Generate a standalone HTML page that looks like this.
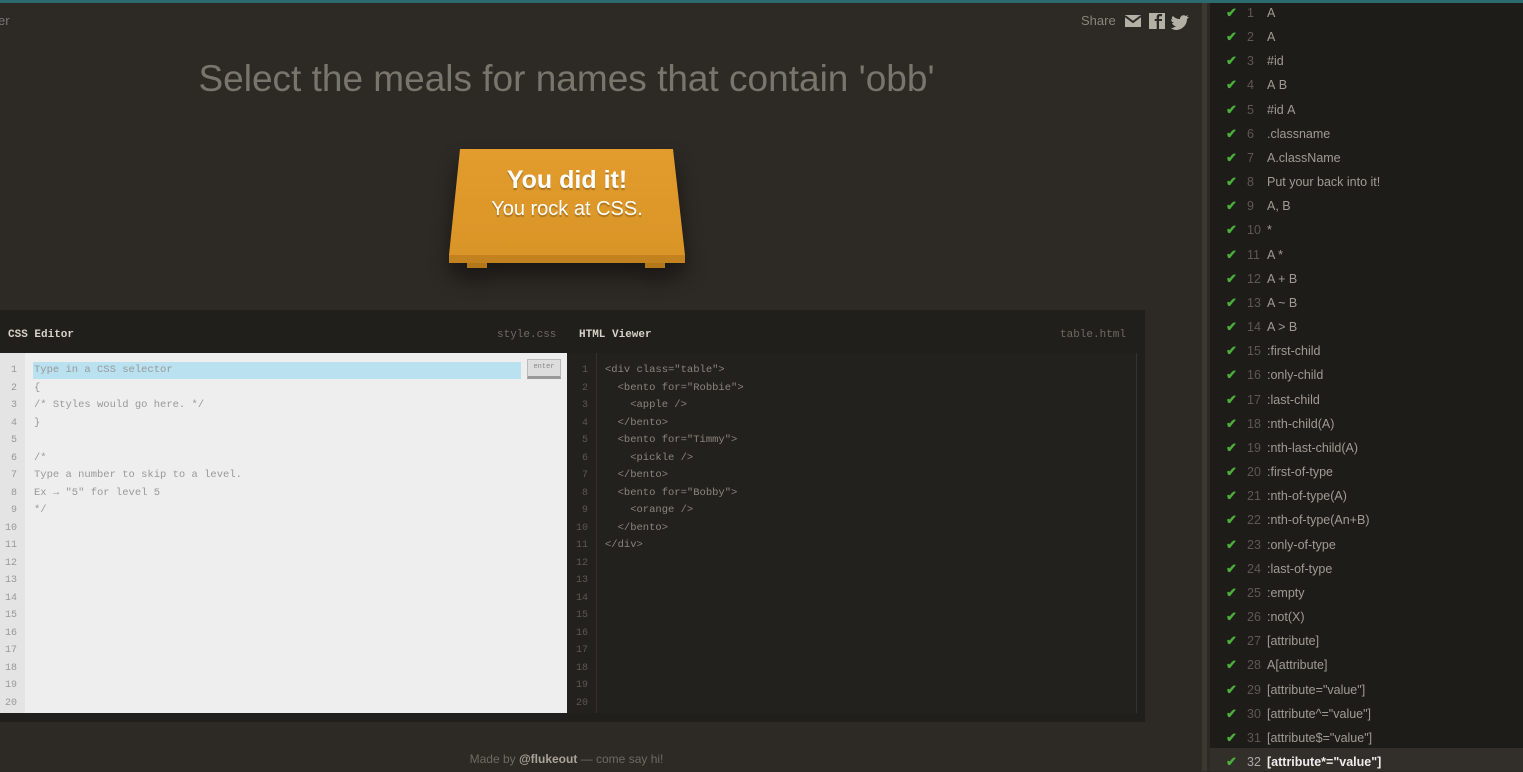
<!DOCTYPE html>
<html><head><style>
*{margin:0;padding:0;box-sizing:border-box}
body{width:1523px;height:771px;overflow:hidden;background:#2d2924;font-family:"Liberation Sans",sans-serif;position:relative}
.top{position:absolute;left:0;top:0;width:1523px;height:3px;background:#2b6a6e}
.mono{font-family:"Liberation Mono",monospace}
.h1{position:absolute;left:0;width:1133px;top:58px;text-align:center;font-size:37px;color:#7a756c}
.wrap{position:absolute;left:449px;top:149px;width:236px;height:120px;filter:drop-shadow(0 12px 10px rgba(0,0,0,.45))}
.tabbot{position:absolute;left:0;top:0;width:236px;height:114px;background:linear-gradient(#e29c2d,#d99427);clip-path:polygon(11px 0,224px 0,236px 106px,236px 114px,0 114px,0 106px)}
.edge{position:absolute;left:0;top:106px;width:236px;height:8px;background:#c2821f}
.leg{position:absolute;top:114px;width:20px;height:5px;background:#b27719}
.ed{position:absolute;left:0;top:310px;width:1145px;height:412px;background:#211f1b}
.hd{position:absolute;top:329px;font-size:11px;font-weight:bold;color:#d7d2c8}
.fn{position:absolute;top:329px;font-size:11px;color:#6e6a62}
.css{position:absolute;left:0;top:353px;width:567px;height:360px;background:#eeeeee}
.gut{position:absolute;left:0;top:353px;width:25px;height:360px;background:#e4e4e4}
.hv{position:absolute;left:567px;top:353px;width:570px;height:360px;background:#23211d;border-right:1px solid #333}
.ln{position:absolute;font-size:10px;line-height:17.5px;text-align:right}
.code{position:absolute;font-size:10.5px;line-height:17.5px;white-space:pre}
.side{position:absolute;left:1210px;top:3px;width:313px;height:768px;background:#1e1c19}
.div{position:absolute;left:1202px;top:3px;width:5px;height:768px;background:#3b3731}
.row{position:absolute;left:0;width:313px;height:24px;font-size:12.5px;color:#a09b92;line-height:20px}
.row .c{position:absolute;left:16px;color:#4caf3a;font-weight:bold;font-size:13px}
.row .n{position:absolute;left:37px;color:#5c5852}
.row .t{position:absolute;left:57px}
</style></head><body>
<div class="top"></div>
<div style="position:absolute;left:-2px;top:13px;font-size:13px;color:#777">er</div>
<div style="position:absolute;left:1081px;top:13px;font-size:13px;color:#8a857c">Share</div>
<svg style="position:absolute;left:1125px;top:13px" width="66" height="17"><rect x="0" y="2" width="16" height="12" fill="#b5b0a6"/><path d="M0 3 L8 9 L16 3" stroke="#2d2924" stroke-width="2" fill="none"/><rect x="24" y="0" width="16" height="16" fill="#b5b0a6"/><path d="M34 16V8h3V6h-3V4.5c0-1 .5-1.2 1.3-1.2H37V1h-2.3c-2.5 0-3 1.5-3 3.2V6h-2v2h2v8z" fill="#2d2924"/><path d="M48 3c2 2 4 3 7 3 0-3 3-5 6-3l2-1-1 2 2 0-2 2c0 6-5 11-11 11-2 0-4-1-5-2 2 0 4-1 5-2-2 0-3-1-4-3h2c-2-1-3-2-3-4l2 1c-2-2-1-3 0-4z" fill="#b5b0a6"/></svg>
<svg style="position:absolute;left:1480px;top:23px" width="20" height="20"><path d="M1 1L19 19M19 1L1 19" stroke="#77736b" stroke-width="1.8"/></svg>
<div class="h1">Select the meals for names that contain 'obb'</div>
<div class="wrap"><div class="tabbot"></div><div class="edge"></div><div class="leg" style="left:18px"></div><div class="leg" style="left:196px"></div></div>
<div style="position:absolute;left:449px;top:166px;width:236px;text-align:center;color:#fff;text-shadow:0 2px 1px rgba(0,0,0,.25)"><div style="font-size:25px;font-weight:bold">You did it!</div><div style="font-size:20px;margin-top:3px">You rock at CSS.</div></div>
<div class="ed"></div>
<div class="hd mono" style="left:8px">CSS Editor</div>
<div class="fn mono" style="left:497px">style.css</div>
<div class="hd mono" style="left:579px">HTML Viewer</div>
<div class="fn mono" style="left:1060px">table.html</div>
<div class="css"></div><div class="gut"></div>
<div style="position:absolute;left:33px;top:362px;width:488px;height:17px;background:#b9e1f0"></div>
<div style="position:absolute;left:527px;top:359px;width:34px;height:20px;background:#ddd;border:1px solid #bbb;border-bottom:3px solid #999;font-size:7px;color:#888;text-align:center;line-height:14px" class="mono">enter</div>
<div class="ln mono" style="left:0;top:362px;width:17px;color:#999">1<br>2<br>3<br>4<br>5<br>6<br>7<br>8<br>9<br>10<br>11<br>12<br>13<br>14<br>15<br>16<br>17<br>18<br>19<br>20</div>
<div class="code mono" style="left:34px;top:362px;color:#999">Type in a CSS selector
{
/* Styles would go here. */
}

/*
Type a number to skip to a level.
Ex → "5" for level 5
*/</div>
<div class="hv"></div>
<div style="position:absolute;left:596px;top:353px;width:1px;height:360px;background:#34312c"></div>
<div class="ln mono" style="left:567px;top:362px;width:21px;color:#5c5850">1<br>2<br>3<br>4<br>5<br>6<br>7<br>8<br>9<br>10<br>11<br>12<br>13<br>14<br>15<br>16<br>17<br>18<br>19<br>20</div>
<div class="code mono" style="left:605px;top:362px;color:#8a857c">&lt;div class="table"&gt;
  &lt;bento for="Robbie"&gt;
    &lt;apple /&gt;
  &lt;/bento&gt;
  &lt;bento for="Timmy"&gt;
    &lt;pickle /&gt;
  &lt;/bento&gt;
  &lt;bento for="Bobby"&gt;
    &lt;orange /&gt;
  &lt;/bento&gt;
&lt;/div&gt;</div>
<div style="position:absolute;left:0;width:1133px;top:752px;text-align:center;font-size:12px;color:#6e6a62">Made by <b style="color:#aaa39a">@flukeout</b> — come say hi!</div>
<div class="div"></div>
<div class="side">
<div class="row" style="top:0"><span class="c">✔</span><span class="n">1</span><span class="t">A</span></div>
<div class="row" style="top:24px"><span class="c">✔</span><span class="n">2</span><span class="t">A</span></div>
<div class="row" style="top:48px"><span class="c">✔</span><span class="n">3</span><span class="t">#id</span></div>
<div class="row" style="top:72px"><span class="c">✔</span><span class="n">4</span><span class="t">A&nbsp;B</span></div>
<div class="row" style="top:97px"><span class="c">✔</span><span class="n">5</span><span class="t">#id&nbsp;A</span></div>
<div class="row" style="top:121px"><span class="c">✔</span><span class="n">6</span><span class="t">.classname</span></div>
<div class="row" style="top:145px"><span class="c">✔</span><span class="n">7</span><span class="t">A.className</span></div>
<div class="row" style="top:169px"><span class="c">✔</span><span class="n">8</span><span class="t">Put your back into it!</span></div>
<div class="row" style="top:193px"><span class="c">✔</span><span class="n">9</span><span class="t">A, B</span></div>
<div class="row" style="top:217px"><span class="c">✔</span><span class="n">10</span><span class="t">*</span></div>
<div class="row" style="top:242px"><span class="c">✔</span><span class="n">11</span><span class="t">A *</span></div>
<div class="row" style="top:266px"><span class="c">✔</span><span class="n">12</span><span class="t">A + B</span></div>
<div class="row" style="top:290px"><span class="c">✔</span><span class="n">13</span><span class="t">A ~ B</span></div>
<div class="row" style="top:314px"><span class="c">✔</span><span class="n">14</span><span class="t">A &gt; B</span></div>
<div class="row" style="top:338px"><span class="c">✔</span><span class="n">15</span><span class="t">:first-child</span></div>
<div class="row" style="top:362px"><span class="c">✔</span><span class="n">16</span><span class="t">:only-child</span></div>
<div class="row" style="top:387px"><span class="c">✔</span><span class="n">17</span><span class="t">:last-child</span></div>
<div class="row" style="top:411px"><span class="c">✔</span><span class="n">18</span><span class="t">:nth-child(A)</span></div>
<div class="row" style="top:435px"><span class="c">✔</span><span class="n">19</span><span class="t">:nth-last-child(A)</span></div>
<div class="row" style="top:459px"><span class="c">✔</span><span class="n">20</span><span class="t">:first-of-type</span></div>
<div class="row" style="top:483px"><span class="c">✔</span><span class="n">21</span><span class="t">:nth-of-type(A)</span></div>
<div class="row" style="top:507px"><span class="c">✔</span><span class="n">22</span><span class="t">:nth-of-type(An+B)</span></div>
<div class="row" style="top:532px"><span class="c">✔</span><span class="n">23</span><span class="t">:only-of-type</span></div>
<div class="row" style="top:556px"><span class="c">✔</span><span class="n">24</span><span class="t">:last-of-type</span></div>
<div class="row" style="top:580px"><span class="c">✔</span><span class="n">25</span><span class="t">:empty</span></div>
<div class="row" style="top:604px"><span class="c">✔</span><span class="n">26</span><span class="t">:not(X)</span></div>
<div class="row" style="top:628px"><span class="c">✔</span><span class="n">27</span><span class="t">[attribute]</span></div>
<div class="row" style="top:652px"><span class="c">✔</span><span class="n">28</span><span class="t">A[attribute]</span></div>
<div class="row" style="top:677px"><span class="c">✔</span><span class="n">29</span><span class="t">[attribute="value"]</span></div>
<div class="row" style="top:701px"><span class="c">✔</span><span class="n">30</span><span class="t">[attribute^="value"]</span></div>
<div class="row" style="top:725px"><span class="c">✔</span><span class="n">31</span><span class="t">[attribute$="value"]</span></div>
<div class="row" style="top:745px;height:23px;background:#322e29;padding-top:4px"><span class="c">✔</span><span class="n" style="color:#aaa">32</span><span class="t" style="color:#eee;font-weight:bold">[attribute*="value"]</span></div>
</div>
</body></html>
